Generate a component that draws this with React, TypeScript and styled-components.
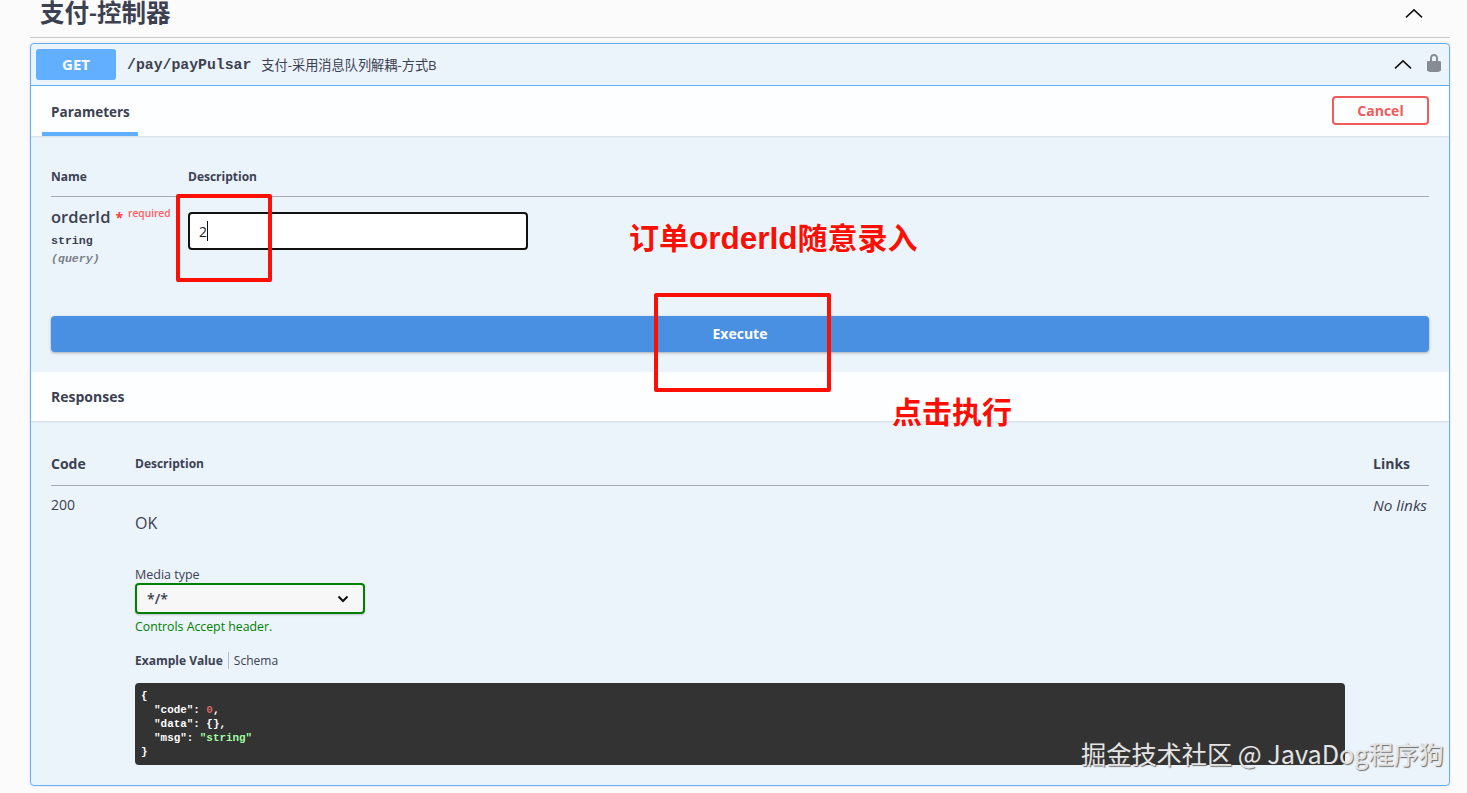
import { createGlobalStyle } from 'styled-components';
import styled from 'styled-components';

const GlobalStyle = createGlobalStyle`
  html, body {
    margin: 0;
    padding: 0;
    background: #fbfbfb;
    font-family: "Open Sans", "Noto Sans CJK SC", sans-serif;
    color: #3b4151;
  }
`;

const Page = styled.div`
  position: relative;
  height: 793px;
  overflow: hidden;
  padding: 0 17px 0 30px;
  box-sizing: border-box;
`;

const SectionTitle = styled.div`
  display: flex;
  align-items: center;
  justify-content: space-between;
  height: 38px;
  padding: 0 27px 11px 10px;
  box-sizing: border-box;
  border-bottom: 1px solid #c9cacb;
  font-size: 24.5px;
  font-weight: 600;
  line-height: 26px;
  color: #3b4151;
`;

const OpBlock = styled.div`
  margin-top: 5px;
  height: 743px;
  box-sizing: border-box;
  border: 1px solid #61affe;
  border-radius: 4px;
  background: #ebf3fb;
  box-shadow: 0 0 3px rgba(0, 0, 0, 0.12);
  overflow: hidden;
`;

const OpHeader = styled.div`
  display: flex;
  align-items: center;
  height: 42px;
  padding: 0 5px;
  box-sizing: border-box;
  border-bottom: 1px solid #61affe;
`;

const Method = styled.div`
  width: 80px;
  height: 31px;
  border-radius: 3px;
  background: #61affe;
  color: #fff;
  font-size: 15px;
  font-weight: 700;
  line-height: 31px;
  text-align: center;
`;

const OpPath = styled.span`
  margin-left: 11px;
  font-family: "Liberation Mono", monospace;
  font-size: 14.8px;
  font-weight: 700;
  color: #3b4151;
`;

const OpSummary = styled.span`
  margin-left: 10px;
  flex: 1;
  font-size: 13.2px;
  color: #3b4151;
`;

const LockIcon = styled.svg`
  margin: 0 0 4px 12px;
  fill: #868c92;
`;

const SectionBar = styled.div<{ $height: number }>`
  display: flex;
  align-items: center;
  justify-content: space-between;
  height: ${(p) => p.$height}px;
  box-sizing: border-box;
  background: #fdfeff;
  box-shadow: 0 1px 2px rgba(0, 0, 0, 0.1);
`;

const ParamTab = styled.div`
  margin-left: 11px;
  align-self: stretch;
  padding: 18px 8px 0 9px;
  box-sizing: border-box;
  border-bottom: 4px solid #61affe;
  font-size: 13.5px;
  font-weight: 700;
  line-height: 16px;
`;

const CancelButton = styled.div`
  width: 97px;
  height: 29px;
  margin: 0 20px 2px 0;
  box-sizing: border-box;
  border: 2px solid #f05b5b;
  border-radius: 4px;
  color: #f05b5b;
  font-size: 14px;
  font-weight: 700;
  line-height: 25px;
  text-align: center;
`;

const Parameters = styled.div`
  height: 236px;
  padding: 30px 20px 0;
  box-sizing: border-box;
`;

const ParamHead = styled.div`
  display: grid;
  grid-template-columns: 137px 1fr;
  height: 30px;
  border-bottom: 1px solid #a5a9b0;
  font-size: 12px;
  font-weight: 700;
  line-height: 22px;
`;

const ParamRow = styled.div`
  display: grid;
  grid-template-columns: 137px 1fr;
  height: 119px;
  padding-top: 10px;
  box-sizing: border-box;
`;

const ParamName = styled.div`
  font-size: 16.5px;
  font-weight: 600;
  line-height: 20px;
  white-space: nowrap;
`;

const RequiredMark = styled.span`
  margin-left: 5px;
  color: #ff3b3b;
  font-size: 14px;
  font-weight: 700;
`;

const RequiredText = styled.sup`
  margin-left: 5px;
  color: #ff5d5d;
  font-size: 10.2px;
  font-weight: 600;
  line-height: 0;
`;

const ParamType = styled.div`
  margin-top: 5px;
  font-family: "Liberation Mono", monospace;
  font-size: 11.6px;
  font-weight: 700;
  line-height: 16px;
`;

const ParamIn = styled.div`
  margin-top: 2px;
  font-family: "Liberation Mono", monospace;
  font-size: 11.6px;
  font-style: italic;
  font-weight: 700;
  color: #7a7f8a;
  line-height: 16px;
`;

const TextInput = styled.div`
  display: flex;
  align-items: center;
  width: 340px;
  height: 38px;
  margin-top: 5px;
  padding-left: 9px;
  box-sizing: border-box;
  border: 2px solid #111;
  border-radius: 4px;
  background: #fff;
  font-size: 14px;
  color: #222;
`;

const Caret = styled.span`
  width: 1px;
  height: 20px;
  background: #111;
`;

const ExecuteButton = styled.div`
  height: 36px;
  border-radius: 4px;
  background: #4990e2;
  box-shadow: 0 1px 3px rgba(0, 0, 0, 0.3);
  color: #fff;
  font-size: 14px;
  font-weight: 700;
  line-height: 36px;
  text-align: center;
`;

const BarTitle = styled.div`
  margin-left: 20px;
  font-size: 14px;
  font-weight: 700;
`;

const Responses = styled.div`
  padding: 28px 20px 0;
`;

const RespGrid = styled.div`
  display: grid;
  grid-template-columns: 84px 1fr 56px;
`;

const RespHead = styled(RespGrid)`
  height: 36px;
  border-bottom: 1px solid #a5a9b0;
  font-weight: 700;
  line-height: 30px;
`;

const HeadCell = styled.div<{ $small?: boolean }>`
  font-size: ${(p) => (p.$small ? 12 : 14)}px;
`;

const StatusCode = styled.div`
  padding-top: 8px;
  font-size: 14px;
  line-height: 22px;
`;

const NoLinks = styled.div`
  padding-top: 8px;
  font-size: 15.3px;
  font-style: italic;
  line-height: 22px;
  white-space: nowrap;
`;

const RespBody = styled.div`
  padding-top: 26px;
`;

const OkText = styled.div`
  font-size: 16px;
  line-height: 22px;
`;

const MediaLabel = styled.div`
  margin-top: 33px;
  font-size: 12.5px;
  line-height: 16px;
`;

const MediaSelect = styled.div`
  display: flex;
  align-items: center;
  justify-content: space-between;
  width: 230px;
  height: 31px;
  padding: 0 14px 0 10px;
  box-sizing: border-box;
  border: 2px solid #008000;
  border-radius: 4px;
  background: #f7f7f7;
  box-shadow: 0 1px 2px rgba(0, 0, 0, 0.2);
  font-size: 14px;
  font-weight: 600;
`;

const MediaHint = styled.div`
  margin-top: 5px;
  color: #008000;
  font-size: 12.3px;
  line-height: 16px;
`;

const ExampleTabs = styled.div`
  display: flex;
  align-items: center;
  margin-top: 16px;
  height: 18px;
  font-size: 12px;
`;

const ExampleTab = styled.span<{ $active?: boolean }>`
  font-weight: ${(p) => (p.$active ? 700 : 400)};
  ${(p) => (p.$active ? 'padding-right: 5px; margin-right: 5px; border-right: 1px solid #b9bdc4;' : '')}
`;

const CodeBlock = styled.pre`
  width: 1210px;
  height: 82px;
  margin: 14px 0 0;
  padding: 6px 6px;
  box-sizing: border-box;
  border-radius: 4px;
  background: #333;
  color: #fff;
  font-family: "Liberation Mono", monospace;
  font-size: 10.9px;
  font-weight: 700;
  line-height: 14px;
`;

const CodeNumber = styled.span`
  color: #d36363;
`;

const CodeString = styled.span`
  color: #a2fca2;
`;

const RedBox = styled.div<{ $left: number; $top: number; $width: number; $height: number }>`
  position: absolute;
  left: ${(p) => p.$left}px;
  top: ${(p) => p.$top}px;
  width: ${(p) => p.$width}px;
  height: ${(p) => p.$height}px;
  box-sizing: border-box;
  border: 4px solid #fd0f06;
  border-radius: 2px;
`;

const RedNote = styled.div<{ $left: number; $top: number }>`
  position: absolute;
  left: ${(p) => p.$left}px;
  top: ${(p) => p.$top}px;
  color: #fb0f05;
  font-family: "Liberation Sans", "Noto Sans CJK SC", sans-serif;
  font-size: 30px;
  font-weight: 700;
  line-height: 34px;
  white-space: nowrap;
  text-shadow: 0 0 3px #fff;
`;

const RedLatin = styled.span`
  font-size: 31.5px;
`;

const Watermark = styled.div`
  position: absolute;
  left: 1081px;
  top: 736px;
  color: #e4e4e4;
  font-family: "Noto Sans CJK SC", sans-serif;
  font-size: 25.2px;
  line-height: 34px;
  white-space: nowrap;
  text-shadow: 1px 1px 1px rgba(60, 60, 60, 0.75);
`;

function ChevronUp({ size = 18 }: { size?: number }) {
  return (
    <svg width={size} height={size * 0.6} viewBox="0 0 18 10" fill="none" stroke="#111" strokeWidth="1.5">
      <path d="M1 9 L9 1.5 L17 9" />
    </svg>
  );
}

function App() {
  return (
    <Page>
      <GlobalStyle />
      <SectionTitle>
        <span>支付-控制器</span>
        <ChevronUp />
      </SectionTitle>
      <OpBlock>
        <OpHeader>
          <Method>GET</Method>
          <OpPath>/pay/payPulsar</OpPath>
          <OpSummary>支付-采用消息队列解耦-方式B</OpSummary>
          <ChevronUp />
          <LockIcon width="20" height="20" viewBox="0 0 20 20">
            <path d="M15.8 8H14V5.6C14 2.703 12.665 1 10 1 7.334 1 6 2.703 6 5.6V8H4c-.553 0-1 .646-1 1.199V17c0 .549.428 1.139.951 1.307l1.197.387C5.672 18.861 6.55 19 7.1 19h5.8c.549 0 1.428-.139 1.951-.307l1.196-.387c.524-.167.953-.757.953-1.306V9.199C17 8.646 16.352 8 15.8 8zM8 8V5.199C8 3.754 8.797 3 10 3c1.203 0 2 .754 2 2.199V8H8z" />
          </LockIcon>
        </OpHeader>
        <SectionBar $height={50}>
          <ParamTab>Parameters</ParamTab>
          <CancelButton>Cancel</CancelButton>
        </SectionBar>
        <Parameters>
          <ParamHead>
            <div>Name</div>
            <div>Description</div>
          </ParamHead>
          <ParamRow>
            <div>
              <ParamName>
                orderId<RequiredMark>*</RequiredMark>
                <RequiredText>required</RequiredText>
              </ParamName>
              <ParamType>string</ParamType>
              <ParamIn>(query)</ParamIn>
            </div>
            <div>
              <TextInput>
                2<Caret />
              </TextInput>
            </div>
          </ParamRow>
          <ExecuteButton>Execute</ExecuteButton>
        </Parameters>
        <SectionBar $height={49}>
          <BarTitle>Responses</BarTitle>
        </SectionBar>
        <Responses>
          <RespHead>
            <HeadCell>Code</HeadCell>
            <HeadCell $small>Description</HeadCell>
            <HeadCell>Links</HeadCell>
          </RespHead>
          <RespGrid>
            <StatusCode>200</StatusCode>
            <RespBody>
              <OkText>OK</OkText>
              <MediaLabel>Media type</MediaLabel>
              <MediaSelect>
                */*
                <svg width="12" height="8" viewBox="0 0 12 8" fill="none" stroke="#111" strokeWidth="2">
                  <path d="M1.5 1.5 L6 6 L10.5 1.5" />
                </svg>
              </MediaSelect>
              <MediaHint>Controls Accept header.</MediaHint>
              <ExampleTabs>
                <ExampleTab $active>Example Value</ExampleTab>
                <ExampleTab>Schema</ExampleTab>
              </ExampleTabs>
              <CodeBlock>
                {'{\n  "code": '}
                <CodeNumber>0</CodeNumber>
                {',\n  "data": {},\n  "msg": '}
                <CodeString>"string"</CodeString>
                {'\n}'}
              </CodeBlock>
            </RespBody>
            <NoLinks>No links</NoLinks>
          </RespGrid>
        </Responses>
      </OpBlock>

      <RedBox $left={176} $top={194} $width={96} $height={88} />
      <RedBox $left={654} $top={293} $width={177} $height={99} />
      <RedNote $left={629} $top={221}>
        订单<RedLatin>orderId</RedLatin>随意录入
      </RedNote>
      <RedNote $left={892} $top={396}>点击执行</RedNote>
      <Watermark>掘金技术社区 @ JavaDog程序狗</Watermark>
    </Page>
  );
}

export default App;
